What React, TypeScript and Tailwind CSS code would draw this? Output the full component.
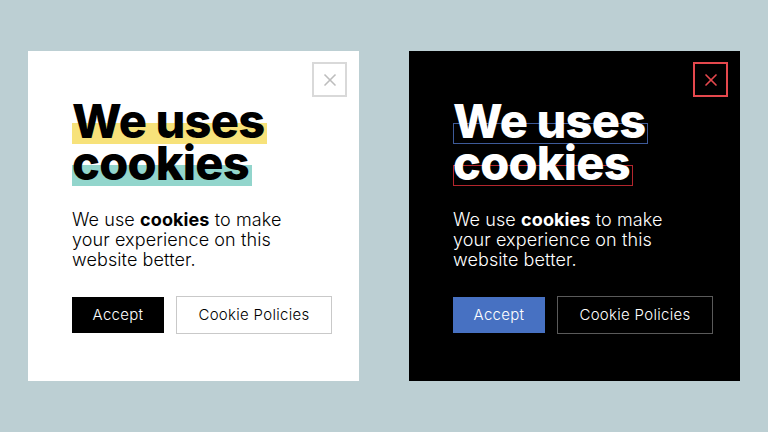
import { X } from "lucide-react";

type Theme = "light" | "dark";

const THEMES: Record<
  Theme,
  {
    card: string;
    text: string;
    close: string;
    mark1: string;
    mark2: string;
    accept: string;
    policy: string;
  }
> = {
  light: {
    card: "bg-white",
    text: "text-black",
    close: "border-[#d9d9d9] text-[#bdbdbd]",
    mark1: "bg-[#f7e27a]",
    mark2: "bg-[#92d5cc]",
    accept: "bg-black text-white",
    policy: "border-[#c9c9c9] text-black",
  },
  dark: {
    card: "bg-black",
    text: "text-white",
    close: "border-[#e5484d] text-[#e5484d]",
    mark1: "border border-[#3d5a99]",
    mark2: "border border-[#b3262d]",
    accept: "bg-[#4771c2] text-white",
    policy: "border-[#5a5a5a] text-white",
  },
};

function Marked({ text, mark }: { text: string; mark: string }) {
  return (
    <span className="relative inline-block">
      <span className={`absolute left-0 right-[-3px] top-[23px] h-[21px] ${mark}`} />
      <span className="relative">{text}</span>
    </span>
  );
}

function CookieCard({ theme }: { theme: Theme }) {
  const t = THEMES[theme];
  return (
    <div className={`relative w-[331px] h-[330px] pl-[44px] pt-[49px] ${t.card} ${t.text}`}>
      <button
        type="button"
        className={`absolute top-[11px] right-[12px] w-[35px] h-[35px] border-2 flex items-center justify-center ${t.close}`}
      >
        <X size={20} strokeWidth={2} />
      </button>

      <h2 className="text-[47px] leading-[42px] font-extrabold tracking-[-0.8px]">
        <Marked text="We uses" mark={t.mark1} />
        <br />
        <Marked text="cookies" mark={t.mark2} />
      </h2>

      <p className="mt-[26px] text-[18px] leading-[20px] font-light tracking-[0.1px]">
        We use <b className="font-bold">cookies</b> to make
        <br />
        your experience on this
        <br />
        website better.
      </p>

      <div className="mt-[26px] flex items-center gap-3">
        <button
          type="button"
          className={`w-[92px] h-[36px] text-[15px] font-light tracking-[0.3px] ${t.accept}`}
        >
          Accept
        </button>
        <button
          type="button"
          className={`w-[156px] h-[38px] border text-[15px] font-light tracking-[0.3px] ${t.policy}`}
        >
          Cookie Policies
        </button>
      </div>
    </div>
  );
}

export default function App() {
  return (
    <div
      className="w-[768px] h-[432px] bg-[#bccfd3] flex items-center justify-center gap-[50px]"
      style={{ fontFamily: "Inter, 'Noto Sans', sans-serif" }}
    >
      <CookieCard theme="light" />
      <CookieCard theme="dark" />
    </div>
  );
}
